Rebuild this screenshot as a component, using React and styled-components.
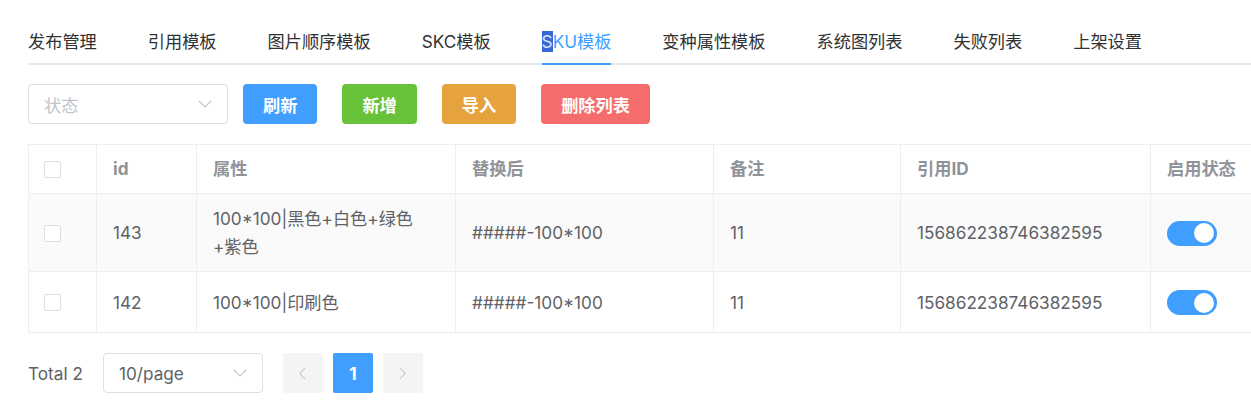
import React from "react";
import styled, { createGlobalStyle } from "styled-components";

const GlobalStyle = createGlobalStyle`
  html, body {
    margin: 0;
    padding: 0;
    background: #fff;
    overflow: hidden;
  }
  body {
    font-family: "Inter", "Noto Sans CJK SC", sans-serif;
    font-size: 17.2px;
    color: #606266;
  }
`;

const Page = styled.div`
  padding: 20px 0 0 28px;
  width: 1320px;
`;

const Tabs = styled.nav`
  display: flex;
  border-bottom: 2px solid #e4e7ed;
`;

const Tab = styled.div`
  position: relative;
  height: 43px;
  line-height: 43px;
  padding: 0 25.5px;
  font-size: 17.2px;
  color: ${({ $active }) => ($active ? "#409eff" : "#303133")};
  cursor: pointer;
  &:first-child {
    padding-left: 0;
  }
  ${({ $active }) =>
    $active &&
    `
    &::after {
      content: "";
      position: absolute;
      left: 25.5px;
      right: 25.5px;
      bottom: -2px;
      height: 2px;
      background: #409eff;
    }
  `}
`;

const Selected = styled.span`
  background: #3568d4;
  color: #d6e4ff;
`;

const Toolbar = styled.div`
  display: flex;
  align-items: center;
  gap: 25px;
  margin-top: 19px;
`;

const SelectBox = styled.div`
  box-sizing: border-box;
  width: ${({ $w }) => $w}px;
  height: 40px;
  border: 1px solid #dcdfe6;
  border-radius: 4px;
  display: flex;
  align-items: center;
  justify-content: space-between;
  padding: 0 15px;
  color: ${({ $placeholder }) => ($placeholder ? "#c0c4cc" : "#606266")};
  margin-right: ${({ $gap }) => $gap || 0}px;
`;

const colors = {
  primary: "#409eff",
  success: "#67c23a",
  warning: "#e6a23c",
  danger: "#f56c6c",
};

const Button = styled.button`
  height: 40px;
  padding: 0 20px;
  border: none;
  border-radius: 4px;
  background: ${({ $type }) => colors[$type]};
  color: #fff;
  font-family: inherit;
  font-size: 17.2px;
  font-weight: 600;
  cursor: pointer;
`;

const TableWrap = styled.div`
  margin-top: 20px;
`;

const Table = styled.table`
  border-collapse: collapse;
  table-layout: fixed;
  width: 1290px;
  border: 1px solid #ebeef5;
  font-size: 17.2px;

  th,
  td {
    border: 1px solid #ebeef5;
    text-align: left;
    vertical-align: middle;
    padding: 10px 16px;
    line-height: 28px;
  }
  th {
    color: #909399;
    font-weight: 700;
    background: #fff;
    height: 28px;
  }
  td {
    height: 39px;
  }
  th:first-child,
  td:first-child {
    padding-left: 15px;
  }
`;

const Row = styled.tr`
  background: ${({ $striped }) => ($striped ? "#fafafa" : "#fff")};
  td {
    padding-top: 11px;
    padding-bottom: 10px;
  }
`;

const Checkbox = styled.span`
  display: block;
  box-sizing: border-box;
  width: 17px;
  height: 17px;
  border: 1px solid #dcdfe6;
  border-radius: 2px;
  background: #fff;
`;

const Switch = styled.span`
  display: flex;
  align-items: center;
  justify-content: flex-end;
  box-sizing: border-box;
  width: 50px;
  height: 25px;
  padding: 0 3px;
  border-radius: 13px;
  background: ${({ $on }) => ($on ? "#409eff" : "#dcdfe6")};
  &::after {
    content: "";
    width: 20px;
    height: 20px;
    border-radius: 50%;
    background: #fff;
  }
`;

const Pager = styled.div`
  display: flex;
  align-items: center;
  margin-top: 20px;
`;

const Total = styled.span`
  margin-right: 20px;
  color: #606266;
`;

const PageBtn = styled.button`
  width: 40px;
  height: 40px;
  margin: 0 5px;
  border: none;
  border-radius: 2px;
  display: flex;
  align-items: center;
  justify-content: center;
  background: ${({ $active }) => ($active ? "#409eff" : "#f4f4f5")};
  color: ${({ $active }) => ($active ? "#fff" : "#c0c4cc")};
  font-family: inherit;
  font-size: 17.2px;
  font-weight: 700;
  &:first-of-type {
    margin-left: 20px;
  }
`;

const Arrow = ({ dir = "down" }) => {
  const pts = {
    down: "1,1 7,7 13,1",
    left: "6,1 1,6.5 6,12",
    right: "1,1 6,6.5 1,12",
  }[dir];
  const box = dir === "down" ? "0 0 14 8" : "0 0 7 13";
  const [w, h] = dir === "down" ? [14, 8] : [7, 13];
  return (
    <svg width={w} height={h} viewBox={box} fill="none">
      <polyline points={pts} stroke="#c0c4cc" strokeWidth="1.1" />
    </svg>
  );
};

const tabs = [
  "发布管理",
  "引用模板",
  "图片顺序模板",
  "SKC模板",
  "SKU模板",
  "变种属性模板",
  "系统图列表",
  "失败列表",
  "上架设置",
];

const rows = [
  {
    id: 143,
    attr: "100*100|黑色+白色+绿色+紫色",
    result: "#####-100*100",
    note: "11",
    ref: "156862238746382595",
  },
  {
    id: 142,
    attr: "100*100|印刷色",
    result: "#####-100*100",
    note: "11",
    ref: "156862238746382595",
  },
];

const widths = [68, 100, 259, 258, 187, 250, 168];

export default function App() {
  return (
    <>
      <GlobalStyle />
      <Page>
        <Tabs>
          {tabs.map((t) =>
            t === "SKU模板" ? (
              <Tab key={t} $active>
                <Selected>S</Selected>KU模板
              </Tab>
            ) : (
              <Tab key={t}>{t}</Tab>
            )
          )}
        </Tabs>

        <Toolbar>
          <SelectBox $w={200} $placeholder $gap={-10}>
            <span>状态</span>
            <Arrow />
          </SelectBox>
          <Button $type="primary">刷新</Button>
          <Button $type="success">新增</Button>
          <Button $type="warning">导入</Button>
          <Button $type="danger">删除列表</Button>
        </Toolbar>

        <TableWrap>
          <Table>
            <colgroup>
              {widths.map((w, i) => (
                <col key={i} style={{ width: w }} />
              ))}
            </colgroup>
            <thead>
              <tr>
                <th>
                  <Checkbox />
                </th>
                <th>id</th>
                <th>属性</th>
                <th>替换后</th>
                <th>备注</th>
                <th>引用ID</th>
                <th>启用状态</th>
              </tr>
            </thead>
            <tbody>
              {rows.map((r, i) => (
                <Row key={r.id} $striped={i % 2 === 0}>
                  <td>
                    <Checkbox />
                  </td>
                  <td>{r.id}</td>
                  <td>{r.attr}</td>
                  <td>{r.result}</td>
                  <td>{r.note}</td>
                  <td>{r.ref}</td>
                  <td>
                    <Switch $on />
                  </td>
                </Row>
              ))}
            </tbody>
          </Table>
        </TableWrap>

        <Pager>
          <Total>Total 2</Total>
          <SelectBox $w={160}>
            <span>10/page</span>
            <Arrow />
          </SelectBox>
          <PageBtn>
            <Arrow dir="left" />
          </PageBtn>
          <PageBtn $active>1</PageBtn>
          <PageBtn>
            <Arrow dir="right" />
          </PageBtn>
        </Pager>
      </Page>
    </>
  );
}
